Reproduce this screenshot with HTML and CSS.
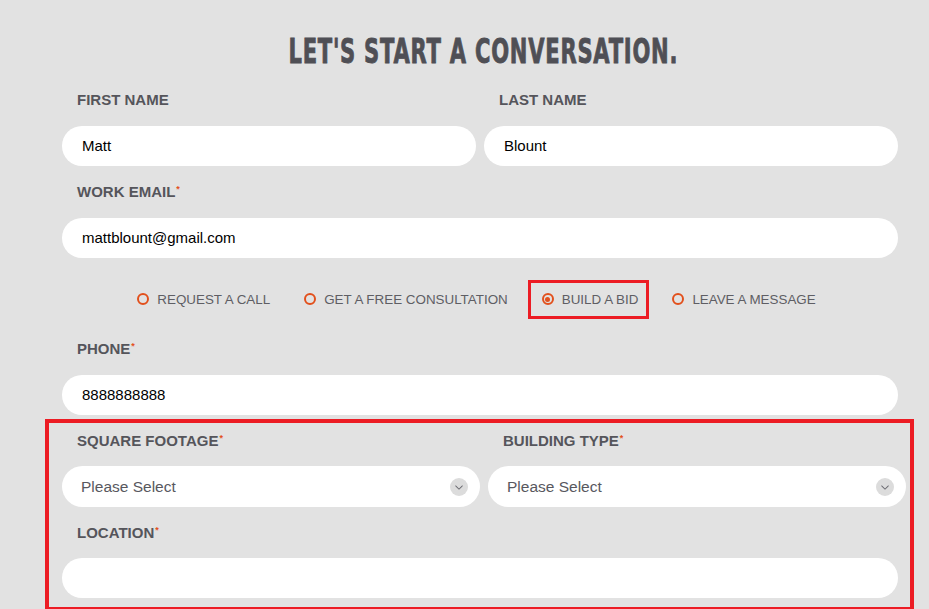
FILE: index.html
```html
<html>
<head>
<title>Let's start a conversation</title>
<link rel="stylesheet" href="styles.css">
</head>
<body>
<div class="page">
<form class="contact">
  <h1 class="title"><span class="squeeze">LET'S START A CONVERSATION.</span></h1>

  <div class="row">
    <div class="field">
      <label class="label">FIRST NAME</label>
      <div class="input">Matt</div>
    </div>
    <div class="field">
      <label class="label">LAST NAME</label>
      <div class="input">Blount</div>
    </div>
  </div>

  <div class="field">
    <label class="label">WORK EMAIL<span class="req">*</span></label>
    <div class="input">mattblount@gmail.com</div>
  </div>

  <div class="choices">
    <div class="choice"><span class="radio"></span>REQUEST A CALL</div>
    <div class="choice"><span class="radio"></span>GET A FREE CONSULTATION</div>
    <div class="choice picked"><span class="radio on"></span>BUILD A BID</div>
    <div class="choice"><span class="radio"></span>LEAVE A MESSAGE</div>
  </div>

  <div class="field">
    <label class="label">PHONE<span class="req">*</span></label>
    <div class="input">8888888888</div>
  </div>

  <div class="bid">
    <div class="row wide">
      <div class="field">
        <label class="label">SQUARE FOOTAGE<span class="req">*</span></label>
        <div class="select">Please Select<span class="arrow"><svg width="8" height="6" viewBox="0 0 8 6"><path d="M0.5 1 L4 4.5 L7.5 1 L7.5 2.6 L4 5.8 L0.5 2.6 Z" fill="#6a6a70"/></svg></span></div>
      </div>
      <div class="field">
        <label class="label">BUILDING TYPE<span class="req">*</span></label>
        <div class="select">Please Select<span class="arrow"><svg width="8" height="6" viewBox="0 0 8 6"><path d="M0.5 1 L4 4.5 L7.5 1 L7.5 2.6 L4 5.8 L0.5 2.6 Z" fill="#6a6a70"/></svg></span></div>
      </div>
    </div>
    <div class="field">
      <label class="label">LOCATION<span class="req">*</span></label>
      <div class="input"></div>
    </div>
  </div>
</form>
</div>
</body>
</html>
```

FILE: styles.css
```css
body { margin:0; background:#e2e2e2; font-family:"Liberation Sans", Arial, sans-serif; overflow:hidden; }
.page { padding:0 31px 0 62px; }
.contact { width:836px; }
.title { margin:0; padding-top:32px; height:38px; line-height:38px; text-align:center;
  font-family:"DejaVu Sans", sans-serif; font-weight:bold;
  font-size:34px; color:#4f4f55; margin-bottom:20px; padding-left:7px; }
.squeeze { display:inline-block; transform:scaleX(0.62); letter-spacing:1.2px; -webkit-text-stroke:0.9px #4f4f55; }
.row { display:grid; grid-template-columns:1fr 1fr; gap:8px; }
.row.wide { margin-right:-8px; }
.field { margin-bottom:16px; }
.label { display:block; padding-left:15px; height:20px; line-height:20px; margin-bottom:16px;
  font-size:15px; font-weight:bold; color:#55555b; }
.bid .label { margin-bottom:15px; }
.req { color:#e2501c; font-size:9px; vertical-align:top; position:relative; top:-3px; margin-left:1px; }
.input { height:40px; line-height:40px; border-radius:20px; background:#fff; padding:0 20px;
  font-size:15px; color:#000; }
.select { height:41px; line-height:41px; border-radius:21px; background:#fff; padding:0 12px 0 19px;
  display:flex; align-items:center; justify-content:space-between; font-size:15.5px; color:#58585e; }
.arrow { width:18px; height:18px; border-radius:50%; background:#dcdcdc; display:flex; align-items:center; justify-content:center; }
.choices { display:flex; justify-content:center; gap:34px; height:40px; align-items:center; padding:5px 7px 0 0; margin-bottom:20px; }
.choice { display:flex; align-items:center; font-size:13.4px; color:#5e5e64; position:relative; }
.radio { width:8px; height:8px; border:2px solid #e2501c; border-radius:50%; margin-right:8px; display:flex; align-items:center; justify-content:center; }
.radio.on::after { content:""; width:5px; height:5px; background:#e2501c; border-radius:50%; }
.picked::before { content:""; position:absolute; left:-14px; right:-11px; top:-12px; bottom:-12px; border:3px solid #ec1c24; }
.bid { position:relative; }
.bid::before { content:""; position:absolute; left:-17px; right:-16px; top:-12px; bottom:-13px; border:4px solid #ec1c24; pointer-events:none; }
```
